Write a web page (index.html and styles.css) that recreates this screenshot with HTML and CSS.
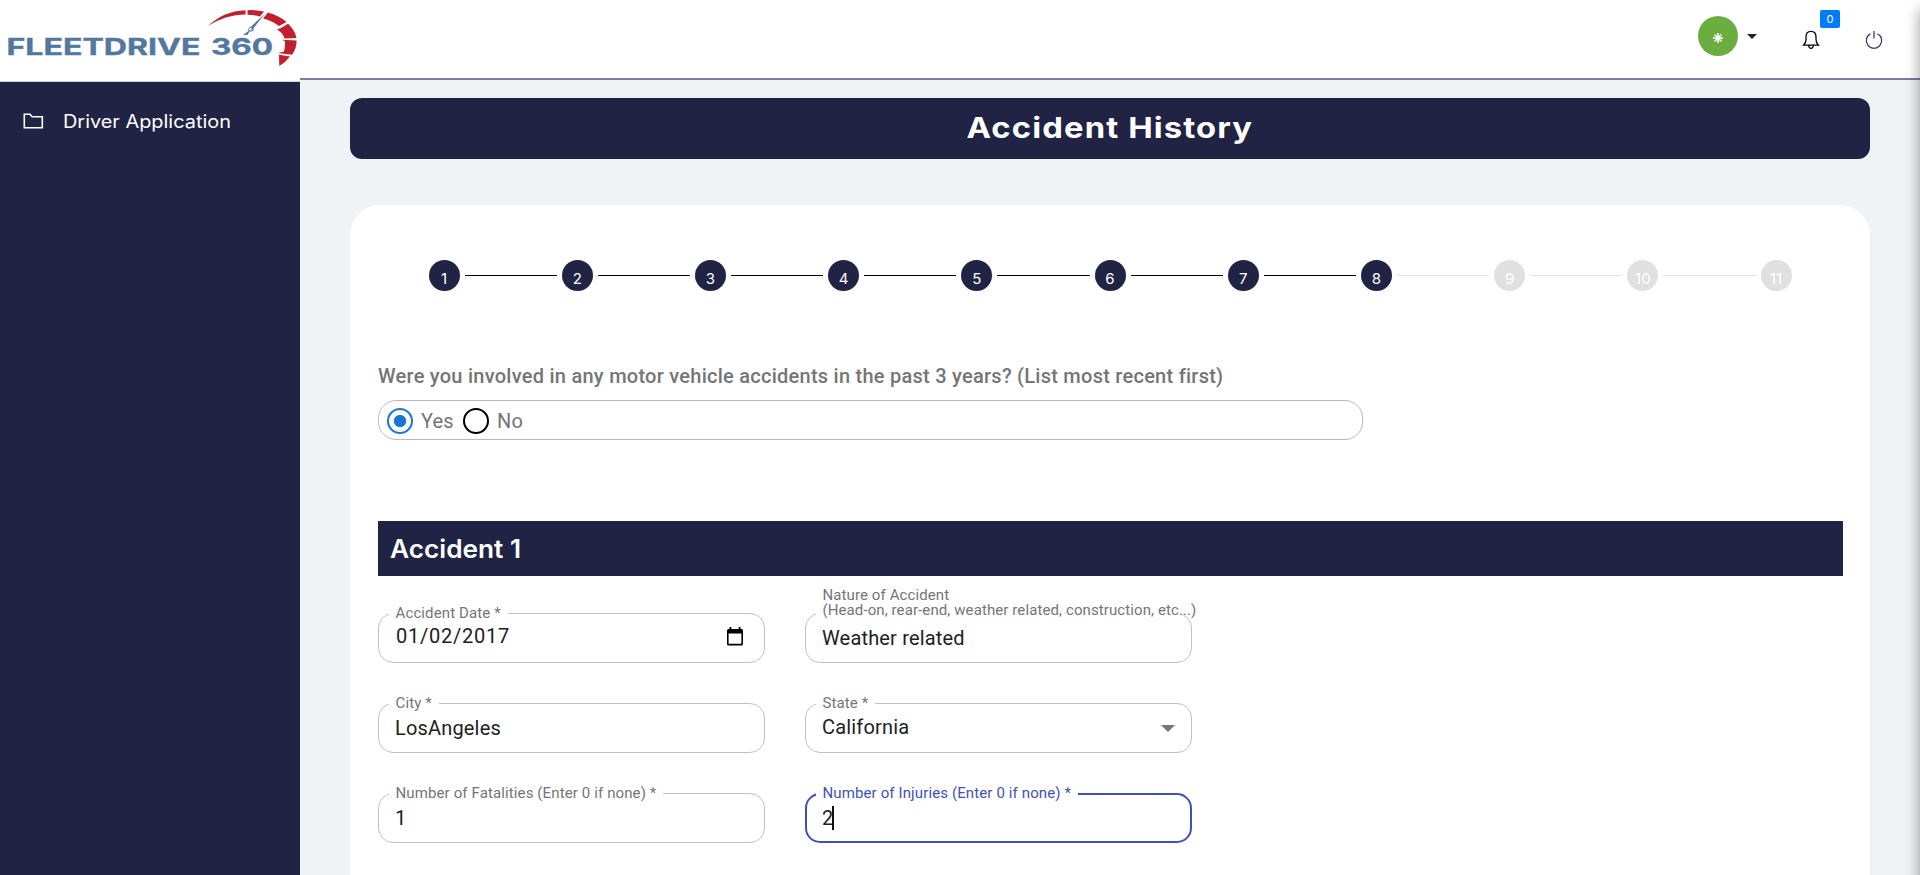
FILE: index.html
```html
<!DOCTYPE html>
<html lang="en">
<head>
<meta charset="utf-8">
<title>Accident History</title>
<link rel="stylesheet" href="styles.css">
</head>
<body>
<div class="app">
  <aside class="sidebar">
    <div class="brand">
      <svg width="300" height="81" viewBox="0 0 300 81">
        <text class="brand-text" x="6.500" y="54.6" textLength="194" lengthAdjust="spacingAndGlyphs">FLEETDRIVE</text>
        <text class="brand-text" x="211" y="54.6" textLength="62" lengthAdjust="spacingAndGlyphs">360</text>
        <path fill="#c01f2e" d="M208 26C219 16 230 11 245.600 10.300L245.600 14.600C232 15 221 18 208 26Z"/>
        <path fill="#c01f2e" d="M247.500 10.200Q256 9.800 264 11.500L260 16.500Q254 14.800 247.500 14.800ZM268 12.500Q279 15.500 286.500 22L279 26Q272 20.500 263 18.500ZM288 23.700Q295 30 296.500 38L284.500 38.500Q283.500 33.500 277 29.500L281 28ZM296.500 40.500Q297 48 292 54.800L278 53L284 51.500Q285.500 46 284.800 41L282 39.800ZM290 56.500Q286 62 279.300 66L279 54.700Z"/>
        <path fill="#52789e" d="M265 13.500L253.500 28.500Q254 30.500 252 31.500L249.500 31.500L247.500 35L243 34.800L248.500 31Q247.500 27.500 251 26.700Z"/>
        <circle cx="250.500" cy="29.200" r="1.200" fill="#fff"/>
      </svg>
    </div>
    <nav class="nav">
      <a class="nav-item">
        <svg width="21" height="17" viewBox="0 0 21 17" fill="none" stroke="#fff" stroke-width="1.600"><path d="M1.300 1.300H7L9.200 3.800H19.300V14.700H1.300Z"/></svg>
        <span>Driver Application</span>
      </a>
    </nav>
  </aside>
  <div class="main">
    <header class="topbar">
      <div class="avatar"><svg width="12" height="12" viewBox="-6 -6 12 12" stroke="#fff" stroke-width="1.500"><path d="M0-5V5M-5 0H5M-3.400-3.400L3.400 3.400M3.400-3.400L-3.400 3.400"/></svg></div>
      <span class="caret"></span>
      <div class="bell">
        <svg width="18" height="20" viewBox="0 0 18 20" fill="none" stroke="#000" stroke-width="1.300"><path d="M1.500 15.200Q4 13 4 9.500V7Q4 1.400 9 1.400T14 7V9.500Q14 13 16.500 15.200ZM6.600 15.500Q7 18.300 9 18.300T11.400 15.500"/></svg>
        <span class="badge">0</span>
      </div>
      <svg class="power" width="18" height="20" viewBox="0 0 18 20" fill="none" stroke="#2b2d62" stroke-width="1.200"><path d="M5.500 3.700A7.700 7.700 0 1 0 12.500 3.700M9 1V8.500"/></svg>
    </header>
    <main class="content">
      <h1 class="page-title"><span>Accident History</span></h1>
      <section class="card">
        <ol class="stepper">
          <li class="dot">1</li><li class="line"></li>
          <li class="dot">2</li><li class="line"></li>
          <li class="dot">3</li><li class="line"></li>
          <li class="dot">4</li><li class="line"></li>
          <li class="dot">5</li><li class="line"></li>
          <li class="dot">6</li><li class="line"></li>
          <li class="dot">7</li><li class="line"></li>
          <li class="dot">8</li><li class="line todo"></li>
          <li class="dot todo">9</li><li class="line todo"></li>
          <li class="dot todo">10</li><li class="line todo"></li>
          <li class="dot todo">11</li>
        </ol>
        <p class="question">Were you involved in any motor vehicle accidents in the past 3 years? (List most recent first)</p>
        <div class="radios">
          <span class="radio checked"></span><span class="radio-label yes">Yes</span>
          <span class="radio"></span><span class="radio-label">No</span>
        </div>
        <h2 class="band"><span>Accident 1</span></h2>
        <div class="fields">
          <fieldset class="field date">
            <legend>Accident Date *</legend>
            <div class="value"><span>01/02/2017</span>
              <svg width="16" height="19" viewBox="0 0 16 19"><path fill="#000" d="M2.500 0H4.300V2H11.700V0H13.500V2H14.500Q16 2 16 3.500V17Q16 18.500 14.500 18.500H1.500Q0 18.500 0 17V3.500Q0 2 1.500 2H2.500ZM1.600 6.500V16.800H14.400V6.500Z"/></svg>
            </div>
          </fieldset>
          <fieldset class="field nature">
            <legend></legend>
            <span class="long-label">Nature of Accident<br>(Head-on, rear-end, weather related, construction, etc...)</span>
            <div class="value"><span>Weather related</span></div>
          </fieldset>
          <fieldset class="field">
            <legend>City *</legend>
            <div class="value"><span>LosAngeles</span></div>
          </fieldset>
          <fieldset class="field state">
            <legend>State *</legend>
            <div class="value"><span>California</span><i class="arrow"></i></div>
          </fieldset>
          <fieldset class="field">
            <legend>Number of Fatalities (Enter 0 if none) *</legend>
            <div class="value"><span>1</span></div>
          </fieldset>
          <fieldset class="field focused">
            <legend>Number of Injuries (Enter 0 if none) *</legend>
            <div class="value"><span>2</span><i class="cursor"></i></div>
          </fieldset>
        </div>
      </section>
    </main>
  </div>
  <div class="edge-shadow"></div>
</div>
</body>
</html>
```
FILE: styles.css
```css
* { box-sizing: border-box; }
body { margin: 0; font-family: Roboto, "Liberation Sans", sans-serif; }
.app { position: relative; display: flex; height: 875px; overflow: hidden; background: #eff3f6; }
.sidebar { width: 300px; background: #212344; }
.brand { height: 82px; background: #fff; border-bottom: 1px solid #d5d5dd; }
.brand svg { display: block; }
.brand-text { font: 700 23px Inter, sans-serif; fill: #52789e; stroke: #52789e; stroke-width: .4px; }
.nav { padding: 26px 23px; }
.nav-item { display: flex; align-items: center; height: 26px; gap: 19px; color: #fff; font: 400 18px Inter, sans-serif; white-space: nowrap; }
.nav-item span { transform: scaleX(1.105); transform-origin: left; }
.main { flex: 1; min-width: 0; }
.topbar { display: flex; justify-content: flex-end; height: 80px; background: #fff; border-bottom: 2px solid #7b7bad; padding-right: 37px; }
.avatar { display: flex; align-items: center; justify-content: center; width: 40px; height: 40px; margin-top: 16px; border-radius: 50%; background: #69ae3e; }
.avatar svg { margin-top: 3px; }
.caret { margin: 34px 45px 0 9px; border: 5.5px solid transparent; border-top: 5.5px solid #212121; border-bottom: 0; height: 0; }
.bell { position: relative; margin: 30px 45px 0 0; height: 20px; }
.badge { position: absolute; left: 18px; top: -20px; width: 20px; height: 18px; border-radius: 2px; background: #007bff; color: #fff; font: 400 11px/18px Inter, sans-serif; text-align: center; }
.power { margin-top: 30px; }
.content { padding: 18px 50px 0; }
.page-title { margin: 0; height: 61px; border-radius: 12px; background: #212344; color: #fff; text-align: center; font: 700 29px/59px Inter, sans-serif; letter-spacing: 1px; }
.page-title span { display: inline-block; transform: scaleX(1.13); }
.card { height: 720px; margin-top: 46px; padding: 55px 28px 0; border-radius: 30px; background: #fff; }
.stepper { display: flex; align-items: center; gap: 5px; margin: 0 50.5px; padding: 0; list-style: none; }
.dot { width: 31px; height: 31px; flex: none; border-radius: 50%; background: #212344; color: #fff; font: 400 15px/38px Inter, sans-serif; text-align: center; }
.line { flex: 1; height: 1px; background: #000; }
.dot.todo, .line.todo { background: #e0e0e0; }
.question { margin: 73px 0 0; height: 24px; color: #757575; font-size: 20px; line-height: 24px; font-weight: 500; letter-spacing: .255px; white-space: nowrap; }
.radios { display: flex; align-items: center; width: 985px; height: 40px; margin-top: 12px; padding-left: 8px; border: 1px solid #bababa; border-radius: 18px; color: #757575; font-size: 20px; letter-spacing: .15px; }
.radio { width: 26px; height: 26px; margin-top: 1px; border: 2.5px solid #000; border-radius: 50%; }
.radio.checked { border-color: #1976d2; background: radial-gradient(circle, #1976d2 5.8px, transparent 6.5px); }
.radio-label { margin: 2px 0 0 8px; }
.radio-label.yes { width: 42px; }
.band { margin: 81px 0 0; width: 1465px; height: 55px; padding-left: 12px; background: #212344; color: #fff; font: 600 25px/57px Inter, sans-serif; }
.band span { display: inline-block; transform: scaleX(1.05); transform-origin: left; }
.fields { display: grid; grid-template-columns: 387px 387px; grid-auto-rows: 57px; gap: 33px 40px; margin-top: 30px; }
.field { position: relative; min-width: 0; margin: 0; padding: 0 10px; border: 1px solid #c1c1c1; border-radius: 15px; height: 57px; color: #212121; }
.field legend { height: 15px; padding: 0 7px 0 6.5px; color: #757575; font-size: 15px; line-height: 14px; letter-spacing: .12px; white-space: nowrap; }
.value { display: flex; align-items: center; height: 34px; padding: 0 6px; font-size: 20px; letter-spacing: .17px; }
.date .value { justify-content: space-between; height: 30px; padding: 0 11px 0 7px; letter-spacing: .75px; }
.field.nature legend { width: 365px; }
.long-label { position: absolute; left: 16.5px; top: -33px; color: #757575; font-size: 15px; line-height: 15px; letter-spacing: .1px; white-space: nowrap; }
.state .value { justify-content: space-between; height: 32px; }
.arrow { border: 7px solid transparent; border-top: 7px solid #757575; border-bottom: 0; margin: 3px 0 0; }
.focused { border: 2px solid #3f51b5; padding: 0 9px; }
.field.focused legend { color: #3f51b5; }
.cursor { width: 2px; height: 24px; margin-left: -1px; background: #111; }
.edge-shadow { position: absolute; left: 100%; top: 10px; width: 20px; height: 880px; box-shadow: 0 0 15px rgba(0, 0, 0, .4); }
```
